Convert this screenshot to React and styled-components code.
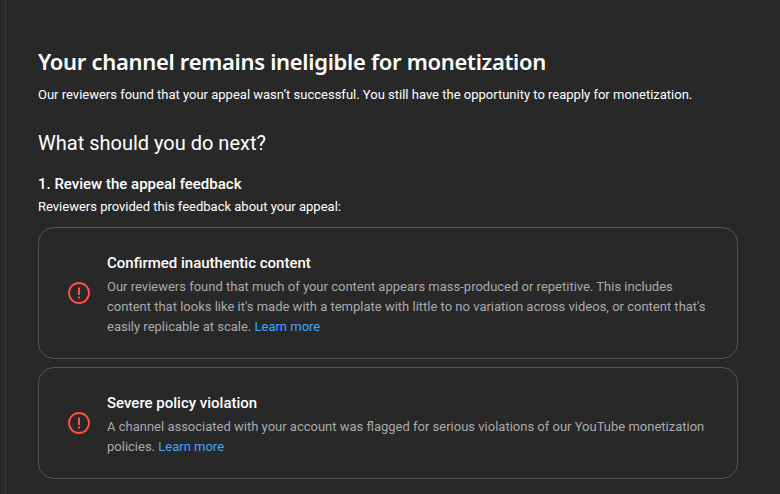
import React from "react";
import styled, { createGlobalStyle } from "styled-components";

const GlobalStyle = createGlobalStyle`
  html, body {
    margin: 0;
    height: 100%;
    background: #282828;
    overflow: hidden;
  }
`;

const Page = styled.div`
  width: 775px;
  height: 494px;
  box-sizing: border-box;
  padding: 0 37px 0 32px;
  margin-left: 5px;
  border-left: 1px solid #3a3a3a;
  background: #282828;
  color: #fff;
  font-family: Roboto, "Liberation Sans", sans-serif;
  overflow: hidden;
`;

const Title = styled.h1`
  margin: 45px 0 0;
  font-family: "Noto Sans", sans-serif;
  font-size: 22px;
  line-height: 32px;
  font-weight: 600;
  letter-spacing: -0.31px;
`;

const Intro = styled.p`
  margin: 8px 0 0;
  font-size: 13px;
  line-height: 20px;
`;

const Heading = styled.h2`
  margin: 24px 0 0;
  font-size: 20px;
  line-height: 28px;
  font-weight: 400;
`;

const StepTitle = styled.h3`
  margin: 17px 0 0;
  font-size: 15px;
  line-height: 20px;
  font-weight: 500;
`;

const StepText = styled.p`
  margin: 4px 0 0;
  font-size: 13px;
  line-height: 18px;
`;

const CardList = styled.div`
  display: flex;
  flex-direction: column;
  gap: 8px;
  margin-top: 11px;
`;

const Card = styled.div`
  display: flex;
  align-items: center;
  gap: 16px;
  box-sizing: border-box;
  width: 700px;
  min-height: ${(p) => p.$height}px;
  padding: 0 24px 0 28px;
  border: 1px solid #575757;
  border-radius: 16px;
`;

const CardBody = styled.div`
  flex: 1;
  padding-top: 3px;
`;

const CardTitle = styled.div`
  font-size: 15px;
  line-height: 20px;
  font-weight: 500;
`;

const CardText = styled.p`
  margin: 4px 0 0;
  font-size: 13px;
  line-height: 20px;
  color: #aaaaaa;
`;

const LearnMore = styled.a`
  color: #3ea6ff;
  text-decoration: none;
`;

const AlertIcon = () => (
  <svg width="24" height="24" viewBox="0 0 24 24" fill="none" style={{ flexShrink: 0 }}>
    <circle cx="12" cy="12" r="10" stroke="#ff4e45" strokeWidth="1.9" />
    <path d="M12 6.5v7.5" stroke="#ff4e45" strokeWidth="2" />
    <path d="M12 15.4v2" stroke="#ff4e45" strokeWidth="2" />
  </svg>
);

const feedback = [
  {
    title: "Confirmed inauthentic content",
    text: "Our reviewers found that much of your content appears mass-produced or repetitive. This includes content that looks like it's made with a template with little to no variation across videos, or content that's easily replicable at scale.",
    height: 132,
  },
  {
    title: "Severe policy violation",
    text: "A channel associated with your account was flagged for serious violations of our YouTube monetization policies.",
    height: 112,
  },
];

export default function App() {
  return (
    <>
      <GlobalStyle />
      <Page>
        <Title>Your channel remains ineligible for monetization</Title>
        <Intro>
          Our reviewers found that your appeal wasn’t successful. You still have the opportunity to reapply for monetization.
        </Intro>
        <Heading>What should you do next?</Heading>
        <StepTitle>1. Review the appeal feedback</StepTitle>
        <StepText>Reviewers provided this feedback about your appeal:</StepText>
        <CardList>
          {feedback.map((item) => (
            <Card key={item.title} $height={item.height}>
              <AlertIcon />
              <CardBody>
                <CardTitle>{item.title}</CardTitle>
                <CardText>
                  {item.text} <LearnMore href="#">Learn more</LearnMore>
                </CardText>
              </CardBody>
            </Card>
          ))}
        </CardList>
      </Page>
    </>
  );
}
